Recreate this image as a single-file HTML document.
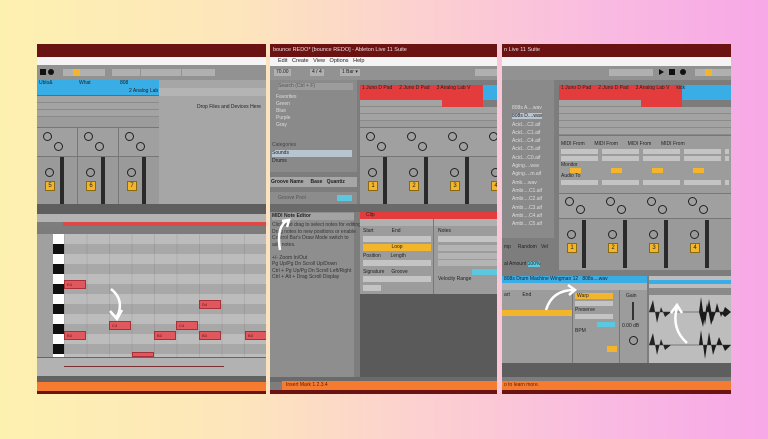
<!DOCTYPE html>
<html><head><meta charset="utf-8"><style>
*{margin:0;padding:0;box-sizing:border-box}
body{width:768px;height:439px;overflow:hidden;position:relative;font-family:"Liberation Sans",sans-serif;
background:linear-gradient(90deg,#fdf1b0 0%,#fde6bb 30%,#fcd0d0 55%,#f9b9e2 80%,#f7a8e6 100%)}
.p{position:absolute;top:44px;height:350px;overflow:hidden;background:#7d7d7d}
.a{position:absolute}
.t{font-size:5px;color:#222;white-space:nowrap;line-height:7px}
.tw{font-size:5.5px;color:#f0e0e0;white-space:nowrap;line-height:13px}
.kn{position:absolute;width:9px;height:9px;border:1.3px solid #222;border-radius:50%}
.yb{position:absolute;width:10px;height:10px;background:#f2b52c;border:1px solid #8a6a10;font-size:6px;text-align:center;line-height:8px;color:#222}
.mt{position:absolute;width:4px;background:#2a2a2a}
.slot{position:absolute;height:7px;background:#a3a3a3;border-bottom:1px solid #8a8a8a}
.note{position:absolute;height:9px;background:#e0585e;border:1px solid #a83038;font-size:4px;color:#5a1010;padding-left:2px;line-height:7px}
.or{position:absolute;height:9px;background:#f57b30}
</style></head><body>

<!-- PANEL 1 -->
<div class="p" style="left:37px;width:229px">
 <div class="a" style="left:0;top:0;width:229px;height:13px;background:#6b1212"></div>
 <div class="a" style="left:0;top:13px;width:229px;height:8px;background:#f4f4f4"></div>
 <div class="a" style="left:0;top:21px;width:229px;height:15px;background:#929292"></div>
 <div class="a" style="left:3px;top:25px;width:6px;height:6px;background:#111"></div>
 <div class="a" style="left:11px;top:25px;width:6px;height:6px;background:#111;border-radius:50%"></div>
 <div class="a" style="left:26px;top:25px;width:42px;height:7px;background:#b0b0b0"></div>
 <div class="a" style="left:36px;top:25px;width:7px;height:7px;background:#f2b52c"></div>
 <div class="a" style="left:75px;top:25px;width:28px;height:7px;background:#b0b0b0"></div>
 <div class="a" style="left:104px;top:25px;width:40px;height:7px;background:#b0b0b0"></div>
 <div class="a" style="left:145px;top:25px;width:33px;height:7px;background:#b0b0b0"></div>
 <!-- tracks -->
 <div class="a" style="left:0;top:36px;width:122px;height:8px;background:#38ade6"></div>
 <div class="a t" style="left:2px;top:36px">Ublo&amp;</div><div class="a t" style="left:42px;top:36px">What</div><div class="a t" style="left:83px;top:36px">808</div>
 <div class="a" style="left:0;top:44px;width:122px;height:8px;background:#38ade6;border-bottom:1px solid #2080b0"></div>
 <div class="a t" style="left:92px;top:44px">2 Analog Lab V</div>
 <div class="slot" style="left:0;top:52px;width:122px"></div><div class="slot" style="left:0;top:59px;width:122px"></div><div class="slot" style="left:0;top:66px;width:122px"></div>
 <div class="a" style="left:0;top:73px;width:122px;height:10px;background:#9c9c9c"></div>
 <div class="a" style="left:122px;top:36px;width:107px;height:124px;background:#a6a6a6"></div>
 <div class="a" style="left:122px;top:44px;width:107px;height:8px;background:#b4b4b4"></div>
 <div class="a t" style="left:160px;top:60px">Drop Files and Devices Here</div>
 <div class="a" style="left:0;top:83px;width:122px;height:29px;background:#a0a0a0;border-top:1px solid #777"></div>
 <div class="a" style="left:0;top:112px;width:122px;height:48px;background:#9a9a9a;border-top:1px solid #777"></div>
 <div class="a" style="left:40px;top:83px;width:1px;height:77px;background:#777"></div><div class="a" style="left:81px;top:83px;width:1px;height:77px;background:#777"></div>
 <div class="kn" style="left:6px;top:88px"></div><div class="kn" style="left:17px;top:98px"></div>
 <div class="kn" style="left:47px;top:88px"></div><div class="kn" style="left:58px;top:98px"></div>
 <div class="kn" style="left:88px;top:88px"></div><div class="kn" style="left:99px;top:98px"></div>
 <div class="kn" style="left:8px;top:124px"></div><div class="kn" style="left:49px;top:124px"></div><div class="kn" style="left:90px;top:124px"></div>
 <div class="yb" style="left:8px;top:137px">5</div><div class="yb" style="left:49px;top:137px">6</div><div class="yb" style="left:90px;top:137px">7</div>
 <div class="mt" style="left:23px;top:113px;height:47px"></div><div class="mt" style="left:64px;top:113px;height:47px"></div><div class="mt" style="left:105px;top:113px;height:47px"></div>
 <div class="a" style="left:0;top:160px;width:229px;height:10px;background:#5e5e5e"></div>
 <!-- piano roll -->
 <div class="a" style="left:0;top:170px;width:229px;height:8px;background:#b3b3b3"></div>
 <div class="a" style="left:26px;top:178px;width:203px;height:4px;background:#e04848"></div>
 <div class="a" style="left:0;top:182px;width:229px;height:8px;background:#7c7c7c"></div>
 <div class="a" style="left:0;top:190px;width:16px;height:123px;background:#a0a0a0"></div>
 <div class="a" style="left:27px;top:190px;width:202px;height:123px;background:repeating-linear-gradient(180deg,#bcbcbc 0 10px,#a8a8a8 10px 20px)"></div>
 <div class="a" style="left:27px;top:190px;width:202px;height:123px;background:repeating-linear-gradient(90deg,rgba(0,0,0,.08) 0 1px,transparent 1px 22.5px)"></div>
 <div class="a" style="left:16px;top:190px;width:11px;height:123px;background:repeating-linear-gradient(180deg,#fff 0 10px,#111 10px 20px)"></div>
 <div class="note" style="left:27px;top:236px;width:22px">E4</div>
 <div class="note" style="left:72px;top:277px;width:22px">C4</div>
 <div class="note" style="left:139px;top:277px;width:22px">C4</div>
 <div class="note" style="left:162px;top:256px;width:22px">D4</div>
 <div class="note" style="left:27px;top:287px;width:22px">B3</div>
 <div class="note" style="left:117px;top:287px;width:22px">B3</div>
 <div class="note" style="left:162px;top:287px;width:22px">B3</div>
 <div class="note" style="left:208px;top:287px;width:22px">B3</div>
 <div class="note" style="left:95px;top:308px;width:22px;height:5px"></div>
 <svg class="a" style="left:60px;top:240px" width="30" height="40"><path d="M14 5 Q28 16 20 33" stroke="#fff" stroke-width="2.5" fill="none"/><path d="M13 27 L20 35 L25 26" stroke="#fff" stroke-width="2.5" fill="none"/></svg>
 <div class="a" style="left:0;top:313px;width:229px;height:19px;background:#b2b2b2;border-top:1px solid #666"></div>
 <div class="a" style="left:27px;top:322px;width:160px;height:1px;background:#7a3030"></div>
 <div class="a" style="left:0;top:332px;width:229px;height:6px;background:#626262"></div>
 <div class="or" style="left:0;top:338px;width:229px"></div>
 <div class="a" style="left:0;top:347px;width:229px;height:3px;background:#6b1212"></div>
</div>

<!-- PANEL 2 -->
<div class="p" style="left:270px;width:227px">
 <div class="a" style="left:0;top:0;width:227px;height:13px;background:#6b1212"></div>
 <div class="a tw" style="left:3px;top:0">bounce REDO*  [bounce REDO] - Ableton Live 11 Suite</div>
 <div class="a" style="left:0;top:13px;width:227px;height:9px;background:#f4f4f4"></div>
 <div class="a t" style="left:8px;top:14px;font-size:5.5px">Edit &nbsp; Create &nbsp; View &nbsp; Options &nbsp; Help</div>
 <div class="a" style="left:0;top:22px;width:227px;height:14px;background:#929292"></div>
 <div class="a t" style="left:4px;top:25px;background:#b0b0b0;padding:0 2px">70.00</div>
 <div class="a t" style="left:40px;top:25px;background:#b0b0b0;padding:0 2px">4 / 4</div>
 <div class="a t" style="left:70px;top:25px;background:#b0b0b0;padding:0 2px">1 Bar ▾</div>
 <div class="a" style="left:205px;top:25px;width:22px;height:7px;background:#b0b0b0"></div>
 <!-- browser -->
 <div class="a" style="left:0;top:36px;width:87px;height:92px;background:#8a8a8a"></div>
 <div class="a t" style="left:8px;top:39px;width:75px;background:#9c9c9c;color:#555">Search (Ctrl + F)</div>
 <div class="a t" style="left:6px;top:50px;color:#ddd">Favorites<br>Green<br>Blue<br>Purple<br>Gray</div>
 <div class="a t" style="left:2px;top:98px;color:#444">Categories</div>
 <div class="a t" style="left:2px;top:106px;width:80px;background:#b8c4d0">Sounds</div>
 <div class="a t" style="left:2px;top:114px">Drums</div>
 <div class="a" style="left:0;top:133px;width:87px;height:10px;background:#a6a6a6"></div>
 <div class="a t" style="left:1px;top:135px;font-weight:bold">Groove Name &nbsp; &nbsp; Base &nbsp; Quantiz</div>
 <div class="a" style="left:0;top:148px;width:87px;height:12px;background:#8c8c8c"></div>
 <div class="a t" style="left:8px;top:151px;color:#555">Groove Pool</div>
 <div class="a" style="left:67px;top:151px;width:15px;height:6px;background:#5cc8e0"></div>
 <!-- tracks -->
 <div class="a" style="left:87px;top:36px;width:140px;height:124px;background:#7c7c7c"></div>
 <div class="a" style="left:90px;top:41px;width:123px;height:7px;background:#e43c3c"></div>
 <div class="a" style="left:213px;top:41px;width:14px;height:7px;background:#38ade6"></div>
 <div class="a t" style="left:92px;top:41px">1 Juno D Pad &nbsp; &nbsp; 2 Juno D Pad &nbsp; &nbsp; 3 Analog Lab V</div>
 <div class="a" style="left:90px;top:48px;width:82px;height:8px;background:#e43c3c"></div>
 <div class="a" style="left:172px;top:48px;width:41px;height:15px;background:#e43c3c"></div>
 <div class="a" style="left:213px;top:48px;width:14px;height:8px;background:#38ade6"></div>
 <div class="slot" style="left:90px;top:56px;width:82px"></div><div class="slot" style="left:90px;top:63px;width:137px"></div><div class="slot" style="left:90px;top:70px;width:137px"></div>
 <div class="a" style="left:90px;top:77px;width:137px;height:6px;background:#9c9c9c"></div>
 <div class="a" style="left:90px;top:83px;width:137px;height:29px;background:#a0a0a0;border-top:1px solid #777"></div>
 <div class="a" style="left:90px;top:112px;width:137px;height:48px;background:#9a9a9a;border-top:1px solid #777"></div>
 <div class="kn" style="left:96px;top:88px"></div><div class="kn" style="left:107px;top:98px"></div>
 <div class="kn" style="left:137px;top:88px"></div><div class="kn" style="left:148px;top:98px"></div>
 <div class="kn" style="left:178px;top:88px"></div><div class="kn" style="left:189px;top:98px"></div>
 <div class="kn" style="left:219px;top:88px"></div>
 <div class="kn" style="left:98px;top:124px"></div><div class="kn" style="left:139px;top:124px"></div><div class="kn" style="left:180px;top:124px"></div><div class="kn" style="left:221px;top:124px"></div>
 <div class="yb" style="left:98px;top:137px">1</div><div class="yb" style="left:139px;top:137px">2</div><div class="yb" style="left:180px;top:137px">3</div><div class="yb" style="left:221px;top:137px">4</div>
 <div class="mt" style="left:113px;top:113px;height:47px"></div><div class="mt" style="left:154px;top:113px;height:47px"></div><div class="mt" style="left:195px;top:113px;height:47px"></div>
 <div class="a" style="left:0;top:160px;width:227px;height:8px;background:#6a6a6a"></div>
 <!-- info -->
 <div class="a" style="left:0;top:168px;width:84px;height:165px;background:#8e8e8e"></div>
 <div class="a t" style="left:2px;top:169px;width:82px;background:#a3a3a3;font-weight:bold">MIDI Note Editor</div>
 <div class="a t" style="left:2px;top:178px;line-height:6.5px;color:#333">Click and drag to select notes for editing.<br>Drag notes to new positions or enable<br>Control Bar's Draw Mode switch to<br>add notes.<br><br>+/- Zoom In/Out<br>Pg Up/Pg Dn Scroll Up/Down<br>Ctrl + Pg Up/Pg Dn Scroll Left/Right<br>Ctrl + Alt + Drag Scroll Display</div>
 <svg class="a" style="left:2px;top:172px" width="22" height="40"><path d="M16 4 Q4 10 8 34" stroke="#fff" stroke-width="2.5" fill="none"/><path d="M10 5 L17 4 L15 11" stroke="#fff" stroke-width="2.5" fill="none"/></svg>
 <!-- clip -->
 <div class="a" style="left:90px;top:168px;width:137px;height:82px;background:#9c9c9c"></div>
 <div class="a" style="left:90px;top:168px;width:137px;height:7px;background:#e43c3c"></div>
 <div class="a t" style="left:96px;top:168px">Clip</div>
 <div class="a" style="left:90px;top:175px;width:137px;height:7px;background:#b0b0b0"></div>
 <div class="a t" style="left:93px;top:184px">Start &nbsp; &nbsp; &nbsp; &nbsp; &nbsp; &nbsp; End</div>
 <div class="a t" style="left:168px;top:184px">Notes</div>
 <div class="a" style="left:93px;top:192px;width:68px;height:6px;background:#c4c4c4"></div>
 <div class="a" style="left:168px;top:192px;width:59px;height:6px;background:#c4c4c4"></div>
 <div class="a t" style="left:93px;top:200px;width:68px;height:7px;background:#f2b52c;text-align:center">Loop</div>
 <div class="a t" style="left:93px;top:209px">Position &nbsp; &nbsp; &nbsp; Length</div>
 <div class="a" style="left:93px;top:216px;width:68px;height:6px;background:#c4c4c4"></div>
 <div class="a t" style="left:93px;top:225px">Signature &nbsp; &nbsp; Groove</div>
 <div class="a" style="left:93px;top:232px;width:68px;height:6px;background:#c4c4c4"></div>
 <div class="a" style="left:93px;top:241px;width:18px;height:6px;background:#c4c4c4"></div>
 <div class="a" style="left:168px;top:201px;width:59px;height:6px;background:#b4b4b4"></div>
 <div class="a" style="left:168px;top:209px;width:59px;height:6px;background:#b4b4b4"></div>
 <div class="a" style="left:168px;top:216px;width:59px;height:6px;background:#b4b4b4"></div>
 <div class="a" style="left:202px;top:225px;width:25px;height:6px;background:#5cc8e0"></div>
 <div class="a t" style="left:168px;top:232px">Velocity Range</div>
 <div class="a" style="left:163px;top:175px;width:1px;height:75px;background:#777"></div>
 <div class="a" style="left:90px;top:250px;width:137px;height:83px;background:#5a5a5a"></div>
 <div class="a" style="left:0;top:333px;width:227px;height:5px;background:#6a6a6a"></div>
 <div class="or" style="left:12px;top:337px;width:215px;font-size:5px;line-height:9px;padding-left:4px;color:#5a1a00">Insert Mark 1.2.3.4</div>
 <div class="a" style="left:0;top:346px;width:227px;height:4px;background:#6b1212"></div>
</div>

<!-- PANEL 3 -->
<div class="p" style="left:502px;width:229px">
 <div class="a" style="left:0;top:0;width:229px;height:13px;background:#6b1212"></div>
 <div class="a tw" style="left:2px;top:0">n Live 11 Suite</div>
 <div class="a" style="left:0;top:13px;width:229px;height:9px;background:#f4f4f4"></div>
 <div class="a" style="left:0;top:22px;width:229px;height:14px;background:#929292"></div>
 <div class="a" style="left:107px;top:25px;width:44px;height:7px;background:#b0b0b0"></div>
 <div class="a" style="left:157px;top:25px;width:0;height:0;border-left:5px solid #111;border-top:3.5px solid transparent;border-bottom:3.5px solid transparent"></div>
 <div class="a" style="left:167px;top:25px;width:6px;height:6px;background:#111"></div>
 <div class="a" style="left:178px;top:25px;width:6px;height:6px;background:#111;border-radius:50%"></div>
 <div class="a" style="left:193px;top:25px;width:36px;height:7px;background:#b0b0b0"></div>
 <div class="a" style="left:203px;top:25px;width:7px;height:7px;background:#f2b52c"></div>
 <!-- file list -->
 <div class="a" style="left:0;top:36px;width:52px;height:158px;background:#8a8a8a"></div>
 <div class="a t" style="left:10px;top:60px;line-height:8.3px;color:#ddd">808s A....wav<br><span style="background:#b8c4d0;color:#222">808s D....wav</span><br>Acid....C2.aif<br>Acid....C1.aif<br>Acid....C4.aif<br>Acid....C5.aif<br>Acid....C0.aif<br>Aging....wav<br>Aging....m.aif<br>Amb....wav<br>Ambi....C1.aif<br>Ambi....C2.aif<br>Ambi....C3.aif<br>Ambi....C4.aif<br>Ambi....C5.aif</div>
 <div class="a t" style="left:2px;top:200px">mp &nbsp; &nbsp; Random &nbsp; Vel</div>
 <div class="a t" style="left:2px;top:217px">al Amount <span style="background:#5cc8e0">100%</span></div>
 <!-- tracks -->
 <div class="a" style="left:55px;top:36px;width:174px;height:190px;background:#7c7c7c"></div>
 <div class="a" style="left:57px;top:41px;width:123px;height:7px;background:#e43c3c"></div>
 <div class="a" style="left:180px;top:41px;width:49px;height:7px;background:#38ade6"></div>
 <div class="a t" style="left:59px;top:41px">1 Juno D Pad &nbsp; &nbsp; 2 Juno D Pad &nbsp; &nbsp; 3 Analog Lab V &nbsp; &nbsp; kick</div>
 <div class="a" style="left:57px;top:48px;width:82px;height:8px;background:#e43c3c"></div>
 <div class="a" style="left:139px;top:48px;width:41px;height:15px;background:#e43c3c"></div>
 <div class="a" style="left:180px;top:48px;width:49px;height:8px;background:#38ade6"></div>
 <div class="slot" style="left:57px;top:56px;width:82px"></div><div class="slot" style="left:57px;top:63px;width:172px"></div><div class="slot" style="left:57px;top:70px;width:172px"></div><div class="slot" style="left:57px;top:77px;width:172px"></div><div class="slot" style="left:57px;top:84px;width:172px"></div>
 <div class="a" style="left:57px;top:91px;width:172px;height:58px;background:#9c9c9c;border-top:1px solid #777"></div>
 <div class="a t" style="left:59px;top:97px">MIDI From &nbsp; &nbsp; &nbsp; MIDI From &nbsp; &nbsp; &nbsp; MIDI From &nbsp; &nbsp; &nbsp; MIDI From</div>
 <div class="a" style="left:59px;top:105px;width:168px;height:5px;background:repeating-linear-gradient(90deg,#c4c4c4 0 37px,transparent 37px 41px)"></div>
 <div class="a" style="left:59px;top:112px;width:168px;height:5px;background:repeating-linear-gradient(90deg,#c4c4c4 0 37px,transparent 37px 41px)"></div>
 <div class="a t" style="left:59px;top:118px">Monitor</div>
 <div class="a" style="left:59px;top:124px;width:168px;height:5px;background:repeating-linear-gradient(90deg,transparent 0 9px,#f2b52c 9px 20px,transparent 20px 41px)"></div>
 <div class="a t" style="left:59px;top:129px">Audio To</div>
 <div class="a" style="left:59px;top:136px;width:168px;height:5px;background:repeating-linear-gradient(90deg,#c4c4c4 0 37px,transparent 37px 41px)"></div>
 <div class="a" style="left:57px;top:149px;width:172px;height:25px;background:#a0a0a0;border-top:1px solid #777"></div>
 <div class="a" style="left:57px;top:174px;width:172px;height:52px;background:#9a9a9a;border-top:1px solid #777"></div>
 <div class="kn" style="left:63px;top:153px"></div><div class="kn" style="left:74px;top:161px"></div>
 <div class="kn" style="left:104px;top:153px"></div><div class="kn" style="left:115px;top:161px"></div>
 <div class="kn" style="left:145px;top:153px"></div><div class="kn" style="left:156px;top:161px"></div>
 <div class="kn" style="left:186px;top:153px"></div><div class="kn" style="left:197px;top:161px"></div>
 <div class="kn" style="left:65px;top:186px"></div><div class="kn" style="left:106px;top:186px"></div><div class="kn" style="left:147px;top:186px"></div><div class="kn" style="left:188px;top:186px"></div>
 <div class="yb" style="left:65px;top:199px">1</div><div class="yb" style="left:106px;top:199px">2</div><div class="yb" style="left:147px;top:199px">3</div><div class="yb" style="left:188px;top:199px">4</div>
 <div class="mt" style="left:80px;top:176px;height:48px"></div><div class="mt" style="left:121px;top:176px;height:48px"></div><div class="mt" style="left:162px;top:176px;height:48px"></div><div class="mt" style="left:203px;top:176px;height:48px"></div>
 <!-- bottom clip -->
 <div class="a" style="left:0;top:232px;width:145px;height:7px;background:#38ade6"></div>
 <div class="a t" style="left:2px;top:232px">808s Drum Machine Wingman 12 &nbsp; 808s....wav</div>
 <div class="a" style="left:0;top:239px;width:145px;height:80px;background:#9c9c9c"></div>
 <div class="a" style="left:0;top:239px;width:145px;height:7px;background:#b0b0b0"></div>
 <div class="a t" style="left:2px;top:248px">art &nbsp; &nbsp; &nbsp; &nbsp; End</div>
 <div class="a" style="left:0;top:266px;width:70px;height:6px;background:#f2b52c"></div>
 <div class="a" style="left:73px;top:249px;width:38px;height:6px;background:#f2b52c"></div>
 <div class="a t" style="left:75px;top:249px">Warp</div>
 <div class="a" style="left:73px;top:257px;width:38px;height:5px;background:#c4c4c4"></div>
 <div class="a t" style="left:73px;top:263px">Preserve</div>
 <div class="a" style="left:73px;top:270px;width:38px;height:5px;background:#c4c4c4"></div>
 <div class="a" style="left:95px;top:278px;width:18px;height:5px;background:#5cc8e0"></div>
 <div class="a t" style="left:73px;top:284px">BPM</div>
 <div class="a" style="left:105px;top:302px;width:10px;height:6px;background:#f2b52c"></div>
 <div class="a" style="left:70px;top:246px;width:1px;height:73px;background:#777"></div>
 <div class="a" style="left:117px;top:246px;width:1px;height:73px;background:#777"></div>
 <div class="a t" style="left:124px;top:249px">Gain</div>
 <div class="a" style="left:130px;top:258px;width:2px;height:18px;background:#333"></div>
 <div class="a t" style="left:120px;top:279px">0.00 dB</div>
 <div class="kn" style="left:127px;top:292px"></div>
 <svg class="a" style="left:40px;top:240px" width="40" height="30"><path d="M4 26 Q10 6 32 6" stroke="#fff" stroke-width="2.5" fill="none"/><path d="M26 1 L33 6 L27 11" stroke="#fff" stroke-width="2.5" fill="none"/></svg>
 <!-- waveform -->
 <div class="a" style="left:147px;top:232px;width:82px;height:87px;background:#bdbdbd"></div>
 <div class="a" style="left:147px;top:236px;width:82px;height:4px;background:#38ade6"></div>
 <div class="a" style="left:147px;top:244px;width:82px;height:7px;background:#8a8a8a"></div>
 <svg class="a" style="left:147px;top:251px" width="82" height="68">
  <path d="M0 17 L4 5 L8 28 L12 12 L16 22 L22 17 L0 17Z M0 50 L4 38 L8 60 L12 44 L16 55 L22 50Z" fill="#222"/>
  <path d="M50 17 L52 2 L56 30 L60 4 L64 26 L68 8 L72 22 L76 12 L82 17 L50 17Z M50 17 L54 32 L58 8 L62 30 L68 14 L76 22 L82 17Z M50 50 L52 35 L56 64 L60 37 L64 60 L70 42 L76 56 L82 50Z" fill="#1a1a1a"/>
  <line x1="0" y1="17" x2="82" y2="17" stroke="#333" stroke-width=".6"/><line x1="0" y1="50" x2="82" y2="50" stroke="#333" stroke-width=".6"/>
  <path d="M38 48 Q22 34 28 12" stroke="#fff" stroke-width="2.5" fill="none"/><path d="M22 18 L28 10 L33 18" stroke="#fff" stroke-width="2.5" fill="none"/>
 </svg>
 <div class="a" style="left:0;top:319px;width:229px;height:14px;background:#5e5e5e"></div>
 <div class="or" style="left:0;top:337px;width:229px;font-size:5px;line-height:9px;padding-left:2px;color:#5a1a00">o to learn more.</div>
 <div class="a" style="left:0;top:346px;width:229px;height:4px;background:#6b1212"></div>
</div>
</body></html>
